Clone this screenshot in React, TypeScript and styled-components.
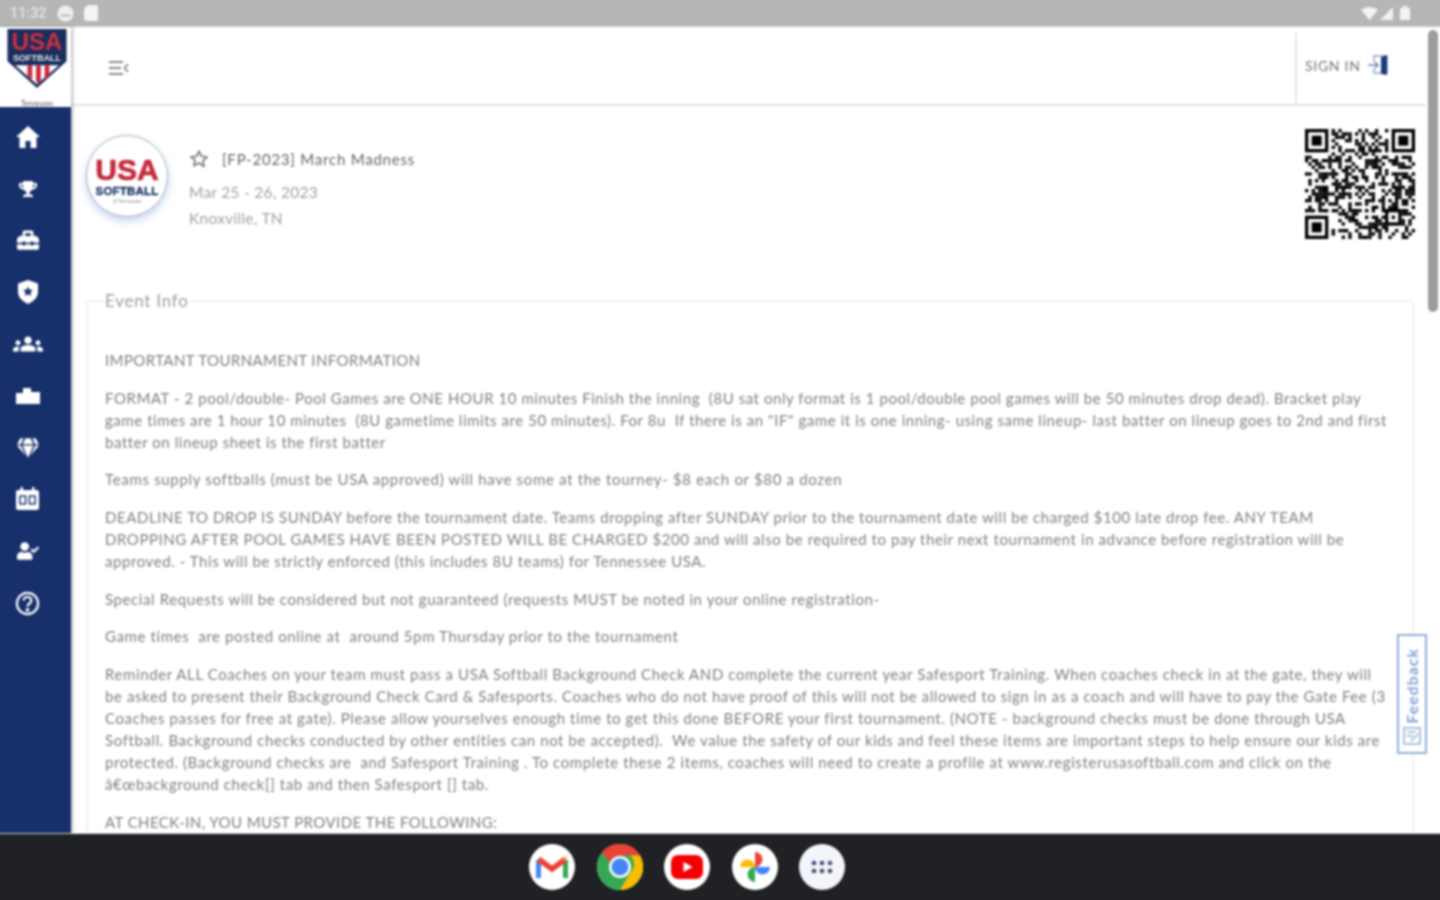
import React from "react";
import styled, { createGlobalStyle } from "styled-components";
import { FaTrophy, FaGem, FaUserCheck, FaToolbox } from "react-icons/fa";
import { MdGroups } from "react-icons/md";

const Global = createGlobalStyle`
  html, body { margin: 0; padding: 0; width: 1440px; height: 900px; overflow: hidden; background: #fff; }
  * { box-sizing: border-box; }
`;

/* The page bleeds 3px past the window on all sides so that the soft focus does not fade at the window's edges. */
const Page = styled.div`
  width: 1446px; height: 906px; margin: -3px; display: flex; flex-direction: column; overflow: hidden;
  font-family: Lato, "Noto Sans", sans-serif; color: #777; filter: blur(0.8px); position: relative; background: #fff;
`;
const StatusBar = styled.div`
  height: 30px; flex: none; background: #b6b6b6; display: flex; align-items: center; justify-content: space-between;
  padding: 3px 33px 0 13px; color: #e6e6e6; border-bottom: 1px solid #c4c4c4;
`;
const StatusGroup = styled.div<{ $gap: number }>`display: flex; align-items: center; gap: ${p => p.$gap}px;`;
const Time = styled.span`font: 500 14px Roboto, sans-serif; width: 37px; letter-spacing: 0.2px;`;
const Body = styled.div`flex: 1; min-height: 0; display: flex;`;
const Sidebar = styled.aside`
  width: 74px; flex: none; display: flex; flex-direction: column; box-shadow: 2px 0 3px rgba(0,0,0,.25); z-index: 2;
`;
const LogoBox = styled.div`
  height: 80px; flex: none; background: #fff; display: flex; flex-direction: column; align-items: center; overflow: hidden;
  padding: 1px 0 0 6px;
`;
const Tiny = styled.div`font-size: 7px; line-height: 8px; color: #555; margin-top: 10px;`;
const Nav = styled.nav`flex: 1; background: #17306b; padding: 4px 0 0 3px; display: flex; flex-direction: column;`;
const NavItem = styled.div`
  height: 51.8px; width: 55px; flex: none; display: flex; align-items: center; justify-content: center; color: #fff;
`;
const Main = styled.main`flex: 1; min-width: 0; display: flex; flex-direction: column; position: relative;`;
const Header = styled.header`
  height: 79px; flex: none; display: flex; align-items: center; justify-content: space-between;
  border-bottom: 2px solid #e2e2e2; padding: 5px 0 0 37px;
`;
const SignArea = styled.div`
  width: 131px; height: 70px; border-left: 2px solid #e6e6e6; display: flex; align-items: center; gap: 6px; padding: 0 0 6px 8px;
  font: 400 14px Lato, sans-serif; letter-spacing: .7px; color: #777;
`;
const Content = styled.div`flex: 1; min-height: 0; overflow: hidden; padding: 23px 12px 0 15px;`;
const EventHead = styled.section`display: flex; height: 162px; flex: none; align-items: flex-start;`;
const EventLogo = styled.div`
  width: 82px; height: 82px; margin: 6px 21px 0 0; padding-top: 7px; border-radius: 50%; flex: none; border: 1.5px solid #aab0b8; background: #fff;
  box-shadow: 0 4px 9px rgba(80,130,230,.35); display: flex; flex-direction: column; align-items: center; justify-content: center;
`;
const LogoUsa = styled.div`font: 900 30px/30px "Liberation Sans", sans-serif; color: #c42a3c; -webkit-text-stroke: .7px #c42a3c;`;
const LogoSoft = styled.div`font: 900 11.5px/12px "Liberation Sans", sans-serif; color: #16305f; letter-spacing: .2px; -webkit-text-stroke: .3px #16305f;`;
const LogoState = styled.div`font-size: 5px; line-height: 8px; color: #999;`;
const EventInfo = styled.div`flex: 1; padding-top: 19px;`;
const TitleRow = styled.div`display: flex; align-items: center; gap: 13px; height: 22px; margin-bottom: 9px; color: #666; font-size: 15px; letter-spacing: .78px;`;
const Meta = styled.div`font-size: 15.5px; line-height: 26px; color: #a2a2a2; letter-spacing: .28px;`;
const Qr = styled.svg`width: 110px; height: 110px; flex: none; margin-right: -1px;`;
const Fieldset = styled.fieldset`
  margin: 0; border: 2px solid #f3f3f3; border-radius: 4px; padding: 38px 17px 0 17px; height: 700px; min-width: 0;
`;
const Legend = styled.legend`
  font-size: 17px; line-height: 20px; color: #9d9d9d; padding: 0; letter-spacing: .75px;
`;
const Para = styled.p<{ $track: number }>`
  margin: 0 0 15.5px; font-size: 15px; line-height: 22.1px; color: #808080; white-space: pre; letter-spacing: ${p => p.$track}px;
`;
const ScrollTrack = styled.div`width: 17px; flex: none; padding: 3px 5px 0 2px; background: #fff;`;
const Thumb = styled.div`height: 282px; width: 10px; border-radius: 5px; background: #9c9c9c;`;
const Feedback = styled.div`
  position: absolute; left: 1326px; top: 607px; width: 30px; height: 120px; background: #fff; border: 2px solid #90add9;
  display: flex; flex-direction: column-reverse; align-items: center; justify-content: flex-start; gap: 4px; padding: 3px 0 7px;
  color: #7e9fd4;
`;
const FeedbackText = styled.span`
  writing-mode: vertical-rl; transform: rotate(180deg); font: 700 15.5px Lato, sans-serif; letter-spacing: 1.2px;
`;
const Dock = styled.footer`
  height: 70px; flex: none; background: #202124; display: flex; justify-content: center; align-items: center; gap: 21.500px;
  border-top: 1px solid #d0d0d0; padding: 0 66px 3px 0; position: relative; z-index: 3;
`;
const DockIcon = styled.div<{ $bg?: string }>`
  width: 46px; height: 46px; border-radius: 50%; background: ${p => p.$bg || "#fff"}; display: flex; align-items: center; justify-content: center;
  flex: none;
`;

const QR_N = 33;
const qrCells = (() => {
  let s = 20231; const out: [number, number][] = [];
  const n = QR_N;
  const skip = (x: number, y: number) => (x < 8 && y < 8) || (x > n - 9 && y < 8) || (x < 8 && y > n - 9) || (x > n - 10 && x < n - 4 && y > n - 10 && y < n - 4);
  for (let y = 0; y < n; y++) for (let x = 0; x < n; x++) {
    s = (s * 1103515245 + 12345) & 0x7fffffff;
    if (!skip(x, y) && ((s >> 16) & 1)) out.push([x, y]);
  }
  return out;
})();

const Finder = ({ x, y }: { x: number; y: number }) => (
  <g>
    <rect x={x} y={y} width={7} height={7} fill="#000" />
    <rect x={x + 1} y={y + 1} width={5} height={5} fill="#fff" />
    <rect x={x + 2} y={y + 2} width={3} height={3} fill="#000" />
  </g>
);
const Align = ({ x, y }: { x: number; y: number }) => (
  <g>
    <rect x={x} y={y} width={5} height={5} fill="#000" />
    <rect x={x + 1} y={y + 1} width={3} height={3} fill="#fff" />
    <rect x={x + 2} y={y + 2} width={1} height={1} fill="#000" />
  </g>
);

const Shield = () => (
  <svg width="66" height="64" viewBox="0 0 66 64">
    <path d="M2 1H64V35L33 63L2 35Z" fill="#1a2d5e" />
    <path d="M10 39H56L33 59Z" fill="#fff" />
    <path d="M23 39h5v15l-5-4zM32 39h5v17l-2.500 2-2.500-2zM41 39h5v11l-5 4z" fill="#c8283c" />
    <text x="33" y="23" textAnchor="middle" fontFamily="Liberation Sans" fontWeight="900" fontSize="25" fill="#d0303f">USA</text>
    <text x="33" y="35" textAnchor="middle" fontFamily="Liberation Sans" fontWeight="900" fontSize="9.500" fill="#e8e8e8">SOFTBALL</text>
  </svg>
);

const Menu = () => (
  <svg width="22" height="16" viewBox="0 0 22 16" fill="none" stroke="#8a8a8a" strokeWidth="1.800">
    <path d="M1 2H15M1 8H13M1 14H15M20 4L16.500 8L20 12" />
  </svg>
);
const SignIcon = () => (
  <svg width="22" height="24" viewBox="0 0 22 24" fill="none">
    <path d="M7 9V3H20V20H15M7 15V20H14" stroke="#8fa4c8" strokeWidth="1.500" />
    <path d="M14 4L20 2V22L14 21Z" fill="#1b3a78" />
    <path d="M1 12H11M8 9L11 12L8 15" stroke="#7288b0" strokeWidth="1.500" />
  </svg>
);
const StarIcon = () => (
  <svg width="20" height="20" viewBox="0 0 24 24" fill="none" stroke="#6e6e6e" strokeWidth="1.800" strokeLinejoin="round">
    <path d="M12 2.500l2.900 6.300 6.900.8-5.100 4.700 1.400 6.800L12 16.700 5.900 20.100l1.400-6.800L2.200 9.600l6.900-.8z" />
  </svg>
);
const Home = () => (
  <svg width="24" height="22" viewBox="0 0 24 22" fill="#fff">
    <path d="M12 0L24 11H20.500V22H14.500V15H9.500V22H3.500V11H0Z" />
  </svg>
);
const ShieldStar = () => (
  <svg width="24" height="26" viewBox="0 0 24 26">
    <path d="M12 1l10 3.500v8c0 6-4.500 10-10 12.500C6.500 22.500 2 18.500 2 12.500v-8z" fill="#fff" />
    <path d="M12 7.500l1.500 3.200 3.500.4-2.600 2.400.7 3.500-3.100-1.800-3.100 1.800.7-3.500L7 11.100l3.500-.4z" fill="#17306b" />
  </svg>
);
const Podium = () => (
  <svg width="24" height="17" viewBox="0 0 24 17" fill="#fff">
    <path d="M0 6H7V1h8V5H24V17H0Z" />
  </svg>
);
const Board = () => (
  <svg width="25" height="24" viewBox="0 0 26 25">
    <path d="M7 0v4M19 0v4" stroke="#fff" strokeWidth="2.500" />
    <rect x="1" y="3" width="24" height="21" rx="2.500" fill="#fff" />
    <rect x="5" y="9.500" width="6" height="8" fill="none" stroke="#17306b" strokeWidth="1.500" />
    <rect x="15" y="9.500" width="6" height="8" fill="none" stroke="#17306b" strokeWidth="1.500" />
  </svg>
);
const Help = () => (
  <svg width="25" height="25" viewBox="0 0 26 26" fill="none" stroke="#fff" strokeWidth="2.300">
    <circle cx="13" cy="13" r="11" />
    <path d="M9 10c0-5 8-5 8 0 0 3-4 3-4 6" />
    <circle cx="13" cy="19.500" r=".8" fill="#fff" />
  </svg>
);
const Wifi = () => <svg width="17" height="13" viewBox="0 0 17 13"><path d="M0 3Q8.500-3 17 3L8.500 13Z" fill="#f4f4f4" /></svg>;
const Signal = () => <svg width="13" height="13" viewBox="0 0 13 13"><path d="M13 0V13H0Z" fill="#f0f0f0" /></svg>;
const Battery = () => <svg width="10" height="14" viewBox="0 0 10 14"><path d="M3 0h4v2h3v12H0V2h3z" fill="#f4f4f4" /></svg>;
const Clock = () => <svg width="17" height="17" viewBox="0 0 17 17"><circle cx="8.500" cy="8.500" r="8" fill="#eee" /><path d="M4 10.500h9" stroke="#aaa" strokeWidth="1.500" /></svg>;
const Sd = () => <svg width="14" height="16" viewBox="0 0 14 16"><path d="M4 0h8a2 2 0 0 1 2 2v12a2 2 0 0 1-2 2H2a2 2 0 0 1-2-2V4z" fill="#f4f4f4" /></svg>;

const Gmail = () => (
  <svg width="32" height="26" viewBox="0 0 32 26" fill="none">
    <path d="M2.500 24V6" stroke="#4285f4" strokeWidth="5" />
    <path d="M29.500 24V6" stroke="#34a853" strokeWidth="5" />
    <path d="M2.500 5L16 15L29.500 5" stroke="#ea4335" strokeWidth="5.500" />
    <path d="M29.500 5l-1-1" stroke="#fbbc04" strokeWidth="5" />
  </svg>
);
const Chrome = () => (
  <svg width="46" height="46" viewBox="0 0 46 46">
    <circle cx="23" cy="23" r="23" fill="#34a853" />
    <path d="M23 0a23 23 0 0 1 20 11.500H23a11.500 11.500 0 0 0-10.500 7L5 8A23 23 0 0 1 23 0z" fill="#ea4335" />
    <path d="M43 11.500A23 23 0 0 1 23 46l10-17a11.500 11.500 0 0 0 0-17.500z" fill="#fbbc04" />
    <circle cx="23" cy="23" r="11" fill="#fff" />
    <circle cx="23" cy="23" r="8.500" fill="#4285f4" />
  </svg>
);
const Youtube = () => (
  <svg width="32" height="24" viewBox="0 0 32 24">
    <rect width="32" height="24" rx="7" fill="#f40000" />
    <path d="M12.500 7l9 5-9 5z" fill="#fff" />
  </svg>
);
const Photos = () => (
  <svg width="36" height="36" viewBox="0 0 36 36">
    <path d="M18 18H3a7.500 7.500 0 0 1 15 0z" fill="#fbbc04" />
    <path d="M18 18V3a7.500 7.500 0 0 1 0 15z" fill="#ea4335" />
    <path d="M18 18h15a7.500 7.500 0 0 1-15 0z" fill="#4285f4" />
    <path d="M18 18v15a7.500 7.500 0 0 1 0-15z" fill="#34a853" />
  </svg>
);
const Apps = () => (
  <svg width="22" height="14" viewBox="0 0 22 14">
    {[3, 11, 19].map((x, i) => <circle key={x} cx={x} cy="3" r="2.300" fill={["#3c4a80", "#3c4a80", "#5c4a80"][i]} />)}
    {[3, 11, 19].map(x => <circle key={x} cx={x} cy="11" r="2.300" fill="#454a60" />)}
  </svg>
);

const paragraphs: { lines: string[]; track: number }[] = [
  { track: 0.39, lines: ["IMPORTANT TOURNAMENT INFORMATION"] },
  { track: 0.56, lines: ["FORMAT - 2 pool/double- Pool Games are ONE HOUR 10 minutes Finish the inning  (8U sat only format is 1 pool/double pool games will be 50 minutes drop dead). Bracket play",
    "game times are 1 hour 10 minutes  (8U gametime limits are 50 minutes). For 8u  If there is an \"IF\" game it is one inning- using same lineup- last batter on lineup goes to 2nd and first",
    "batter on lineup sheet is the first batter"] },
  { track: 0.68, lines: ["Teams supply softballs (must be USA approved) will have some at the tourney- $8 each or $80 a dozen"] },
  { track: 0.57, lines: ["DEADLINE TO DROP IS SUNDAY before the tournament date. Teams dropping after SUNDAY prior to the tournament date will be charged $100 late drop fee. ANY TEAM",
    "DROPPING AFTER POOL GAMES HAVE BEEN POSTED WILL BE CHARGED $200 and will also be required to pay their next tournament in advance before registration will be",
    "approved. - This will be strictly enforced (this includes 8U teams) for Tennessee USA."] },
  { track: 0.6, lines: ["Special Requests will be considered but not guaranteed (requests MUST be noted in your online registration-"] },
  { track: 0.61, lines: ["Game times  are posted online at  around 5pm Thursday prior to the tournament"] },
  { track: 0.6, lines: ["Reminder ALL Coaches on your team must pass a USA Softball Background Check AND complete the current year Safesport Training. When coaches check in at the gate, they will",
    "be asked to present their Background Check Card & Safesports. Coaches who do not have proof of this will not be allowed to sign in as a coach and will have to pay the Gate Fee (3",
    "Coaches passes for free at gate). Please allow yourselves enough time to get this done BEFORE your first tournament. (NOTE - background checks must be done through USA",
    "Softball. Background checks conducted by other entities can not be accepted).  We value the safety of our kids and feel these items are important steps to help ensure our kids are",
    "protected. (Background checks are  and Safesport Training . To complete these 2 items, coaches will need to create a profile at www.registerusasoftball.com and click on the",
    "â€œbackground check[] tab and then Safesport [] tab."] },
  { track: 0.43, lines: ["AT CHECK-IN, YOU MUST PROVIDE THE FOLLOWING:"] },
];

export default function App() {
  return (
    <Page>
      <Global />
      <StatusBar>
        <StatusGroup $gap={10}><Time>11:32</Time><Clock /><Sd /></StatusGroup>
        <StatusGroup $gap={7}>
          <StatusGroup $gap={2}><Wifi /><Signal /></StatusGroup>
          <Battery />
        </StatusGroup>
      </StatusBar>
      <Body>
        <Sidebar>
          <LogoBox><Shield /><Tiny>Tennessee</Tiny></LogoBox>
          <Nav>
            <NavItem><Home /></NavItem>
            <NavItem><FaTrophy size={18} /></NavItem>
            <NavItem><FaToolbox size={22} /></NavItem>
            <NavItem><ShieldStar /></NavItem>
            <NavItem><MdGroups size={30} /></NavItem>
            <NavItem><Podium /></NavItem>
            <NavItem><FaGem size={22} /></NavItem>
            <NavItem><Board /></NavItem>
            <NavItem><FaUserCheck size={22} /></NavItem>
            <NavItem><Help /></NavItem>
          </Nav>
        </Sidebar>
        <Main>
          <Header>
            <Menu />
            <SignArea>SIGN IN <SignIcon /></SignArea>
          </Header>
          <Content>
            <EventHead>
              <EventLogo>
                <LogoUsa>USA</LogoUsa>
                <LogoSoft>SOFTBALL</LogoSoft>
                <LogoState>of Tennessee</LogoState>
              </EventLogo>
              <EventInfo>
                <TitleRow><StarIcon />[FP-2023] March Madness</TitleRow>
                <Meta>Mar 25 - 26, 2023</Meta>
                <Meta>Knoxville, TN</Meta>
              </EventInfo>
              <Qr viewBox={`0 0 ${QR_N} ${QR_N}`}>
                {qrCells.map(([x, y]) => <rect key={`${x}-${y}`} x={x} y={y} width={1} height={1} fill="#000" />)}
                <Finder x={0} y={0} /><Finder x={QR_N - 7} y={0} /><Finder x={0} y={QR_N - 7} /><Align x={QR_N - 9} y={QR_N - 9} />
              </Qr>
            </EventHead>
            <Fieldset>
              <Legend>Event Info</Legend>
              {paragraphs.map((para, i) => (
                <Para key={i} $track={para.track}>
                  {para.lines.map((l, j) => <React.Fragment key={j}>{l}{j < para.lines.length - 1 && <br />}</React.Fragment>)}
                </Para>
              ))}
            </Fieldset>
          </Content>
          <Feedback>
            <svg width="18" height="18" viewBox="0 0 18 18" fill="none" stroke="#90add9" strokeWidth="1.500"><rect x="1" y="1" width="16" height="16" /><path d="M4 5h9M4 9h6M8 14l7-7" /></svg>
            <FeedbackText>Feedback</FeedbackText>
          </Feedback>
        </Main>
        <ScrollTrack><Thumb /></ScrollTrack>
      </Body>
      <Dock>
        <DockIcon><Gmail /></DockIcon>
        <DockIcon><Chrome /></DockIcon>
        <DockIcon><Youtube /></DockIcon>
        <DockIcon><Photos /></DockIcon>
        <DockIcon $bg="#f4f5fa"><Apps /></DockIcon>
      </Dock>
    </Page>
  );
}
